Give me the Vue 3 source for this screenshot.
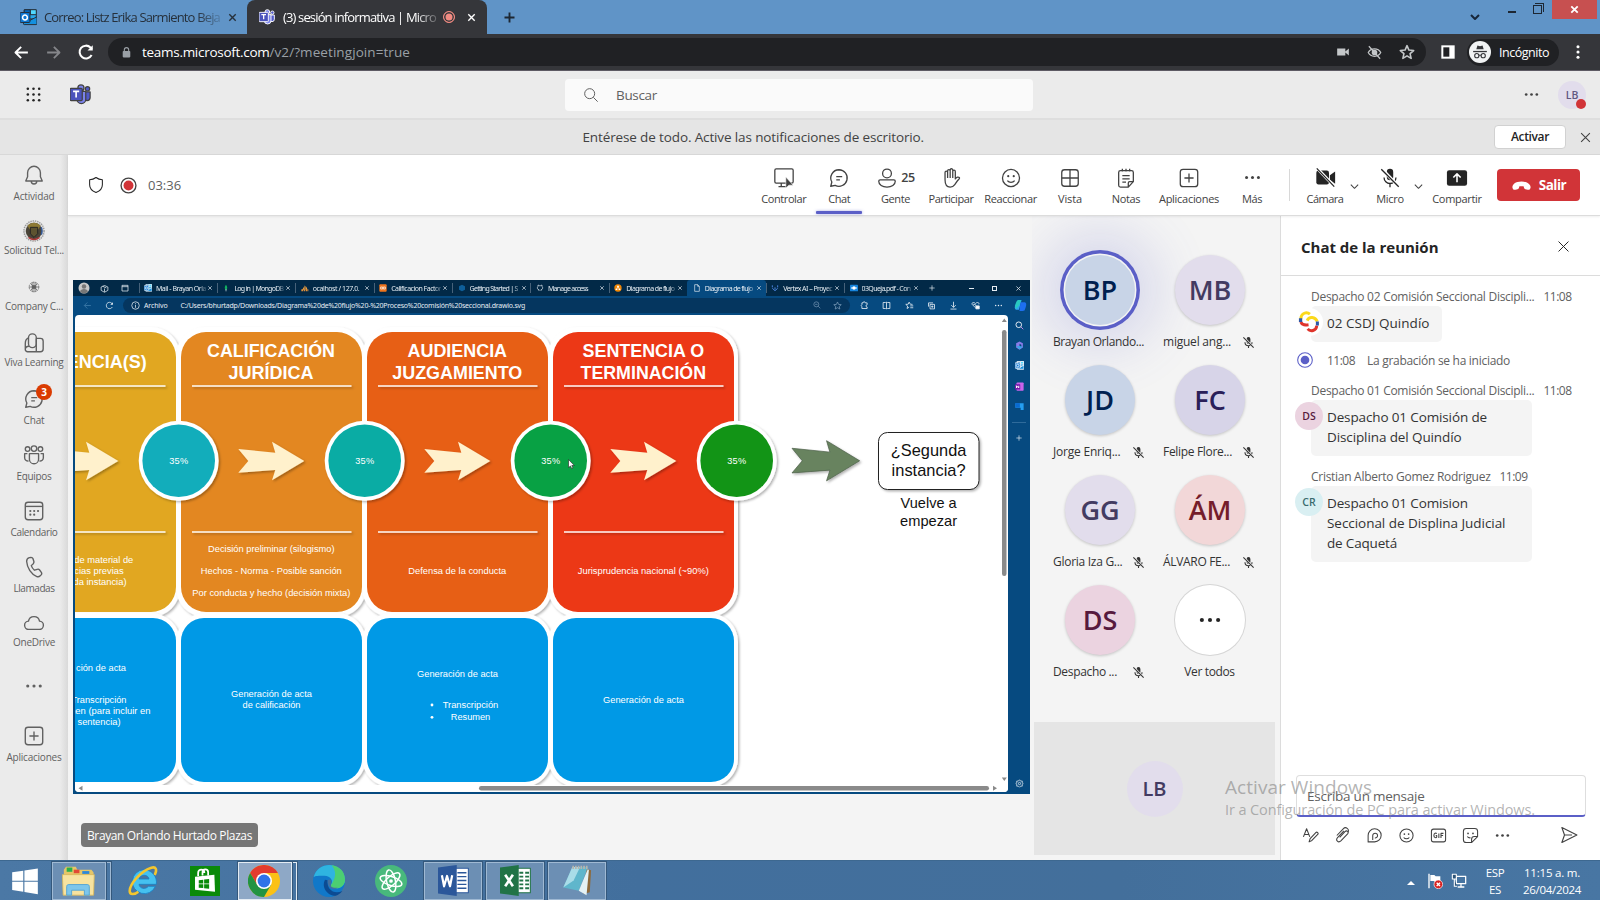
<script setup>
import { h } from 'vue'

// Tunes letter spacing so a label occupies the given width in px.
const vFit = {
  mounted(el, { value }) {
    const n = el.textContent.trim().length
    const w = el.getBoundingClientRect().width
    if (value && n) el.style.letterSpacing = (value - w) / n + 'px'
  },
}

const teams = '<circle cx="12.500" cy="4.500" r="3.500" fill="#7b83eb"/><circle cx="20" cy="5.500" r="2.500" fill="#5059c9"/><path d="M16 9h7v6.500a3.500 3.500 0 0 1-7 0z" fill="#5059c9"/><path d="M8 8.500h10v9a5 5 0 0 1-10 0z" fill="#7b83eb"/><rect x="0" y="5" width="14" height="14" rx="1.200" fill="#4b53bc"/><path d="M3.500 8.500h7M7 8.500V15.500" stroke="#fff" stroke-width="1.900"/>'
const outlook = '<rect x="6" y="1" width="17" height="13" rx="1" fill="#28a8ea"/><path d="M14.500 1H23v7h-8.500z" fill="#50d9ff"/><path d="M6 1h8.500v7H6z" fill="#0364b8"/><path d="M5 11l9 5 10-5v10a1 1 0 0 1-1 1H6a1 1 0 0 1-1-1z" fill="#1490df"/><rect x="0" y="5" width="14" height="14" rx="1.200" fill="#0f78d4"/><circle cx="7" cy="12" r="3.400" fill="none" stroke="#fff" stroke-width="2.100"/>'
const dots = '<g fill="currentColor" stroke="none"><circle cx="4.500" cy="12" r="1.900"/><circle cx="12" cy="12" r="1.900"/><circle cx="19.500" cy="12" r="1.900"/></g>'
const chatPath = '<path d="M12 3a9 9 0 1 1-4.200 17L3 21l1.200-4.600A9 9 0 0 1 12 3z"/><path d="M9 10.500h6.500M9 14h4"/>'
const smile = '<circle cx="12" cy="12" r="9.300"/><path d="M8 14.800c2 2.500 6 2.500 8 0"/><g fill="currentColor" stroke="none"><circle cx="9" cy="10" r="1.200"/><circle cx="15" cy="10" r="1.200"/></g>'
const micOff = '<rect x="8.500" y="2" width="7" height="12.500" rx="3.500" fill="currentColor" stroke="none"/><path d="M5.500 11.500a6.500 6.500 0 0 0 13 0M12 18v4"/><path d="M3.500 2.500l18 19" stroke="var(--bg,#fff)" stroke-width="3.500"/><path d="M2.500 2.500l19 19"/>'
const plusBox = '<rect x="2.500" y="2.500" width="19" height="19" rx="3"/><path d="M12 7v10M7 12h10"/>'
const icons = {
  teams, outlook, dots, smile, micOff, plusBox,
  chat: chatPath,
  close: '<path d="M5 5l14 14M19 5L5 19"/>',
  plus: '<path d="M12 4v16M4 12h16"/>',
  down: '<path d="M4 8l8 8 8-8"/>',
  back: '<path d="M21 12H4M11.500 4L3.500 12l8 8"/>',
  fwd: '<path d="M3 12h17M12.500 4l8 8-8 8"/>',
  reload: '<path d="M19.500 16A8.500 8.500 0 1 1 18 6l2 2"/><path d="M21 3v7h-7z" fill="currentColor" stroke="none"/>',
  lock: '<rect x="5" y="9" width="14" height="12" rx="1.500" fill="currentColor" stroke="none"/><path d="M8 10V7a4 4 0 0 1 8 0v3"/>',
  cam: '<path d="M2 6h14v12H2zM16 11l6-5v12l-6-5z" fill="currentColor" stroke="none"/>',
  eyeOff: '<path d="M2 12c4-8 16-8 20 0-4 8-16 8-20 0z"/><circle cx="12" cy="12" r="3.500" fill="currentColor"/><path d="M3 2l18 20"/>',
  star: '<path d="M12 2.500l2.900 6.600 7.100.7-5.400 4.700 1.600 7L12 17.800l-6.200 3.700 1.600-7L2 9.800l7.100-.7z"/>',
  side: '<path d="M2 2h20v20H2z" fill="#fff" stroke="none"/><path d="M5 5h9v14H5z" fill="#202124" stroke="none"/>',
  incog: '<circle cx="12" cy="12" r="12" fill="#f1f3f4" stroke="none"/><path d="M8 9l1.200-4 2.800.7 2.800-.7L16 9z" fill="#35363a" stroke="none"/><path d="M4.500 11.500h15" stroke="#35363a"/><g fill="none" stroke="#35363a" stroke-width="1.200"><circle cx="8.500" cy="16" r="2.300"/><circle cx="15.500" cy="16" r="2.300"/><path d="M11 15.500h2"/></g>',
  kebab: '<g fill="currentColor" stroke="none"><circle cx="12" cy="4" r="2.300"/><circle cx="12" cy="12" r="2.300"/><circle cx="12" cy="20" r="2.300"/></g>',
  waffle: '<g fill="#242424" stroke="none"><circle cx="4" cy="4" r="1.800"/><circle cx="12" cy="4" r="1.800"/><circle cx="20" cy="4" r="1.800"/><circle cx="4" cy="12" r="1.800"/><circle cx="12" cy="12" r="1.800"/><circle cx="20" cy="12" r="1.800"/><circle cx="4" cy="20" r="1.800"/><circle cx="12" cy="20" r="1.800"/><circle cx="20" cy="20" r="1.800"/></g>',
  search: '<circle cx="10" cy="10" r="7.500"/><path d="M15.500 15.500L22 22"/>',
  shield: '<path d="M12 2c2.500 2 5.500 3 8.500 3v6.500c0 5-3.500 8.500-8.500 10.500-5-2-8.500-5.500-8.500-10.500V5C6.500 5 9.500 4 12 2z"/>',
  rec: '<circle cx="12" cy="12" r="10.500" stroke-width="1.900"/><circle cx="12" cy="12" r="7" fill="#d13438" stroke="none"/>',
  control: '<rect x="2" y="2" width="20" height="15.500" rx="1.500"/><path d="M9 17.500V21M6 21.500h8"/><path d="M14 11v12l3.300-3.200H22z" fill="currentColor" stroke="#fff" stroke-width=".6"/>',
  person: '<circle cx="12" cy="7" r="4.800"/><path d="M4.500 14h15a1.500 1.500 0 0 1 1.500 1.500c0 4-4 6.500-9 6.500s-9-2.500-9-6.500A1.500 1.500 0 0 1 4.500 14z"/>',
  hand: '<path d="M5.500 14V6a1.400 1.400 0 0 1 2.800 0V4.200a1.400 1.400 0 0 1 2.800 0V3.300a1.400 1.400 0 0 1 2.800 0v1.500a1.400 1.400 0 0 1 2.800 0V13c1.500-2 3.300-2.500 4.300-1.500.6.600.2 1.300-.4 1.800-2.300 1.900-3 4-4.500 6-1.300 1.800-3 2.700-5 2.700-3.800 0-5.600-3-5.600-8zM8.300 6v6M11.100 4.500V12M13.900 4.800V12"/>',
  grid: '<rect x="3" y="3" width="18" height="18" rx="3"/><path d="M12 3v18M3 12h18"/>',
  notes: '<path d="M4 6a2 2 0 0 1 2-2h12a2 2 0 0 1 2 2v10l-5.500 6H6a2 2 0 0 1-2-2zM20 16h-4a1.500 1.500 0 0 0-1.500 1.500V22M8 2v3M12 2v3M16 2v3M8 9.500h8M8 13h8M8 16.500h4"/>',
  camOff: '<rect x="1.500" y="4" width="14.500" height="16" rx="2.500" fill="currentColor" stroke="none"/><path d="M17 9.500L23 5v14l-6-4.500z" fill="currentColor" stroke="none"/><path d="M3.500 2.500l19 20" stroke="#fff" stroke-width="3.500"/><path d="M2 1.500l20 21"/>',
  share: '<rect x="1" y="3.500" width="22" height="17" rx="2.500" fill="currentColor" stroke="none"/><path d="M12 16.500V8M8 11.500L12 7.500l4 4" stroke="#fff" stroke-width="1.700"/>',
  hang: '<path d="M2 15.500c-1.500-3 1.500-8 10-8s11.500 5 10 8c-.5 1.500-1.500 1.600-3 1.300l-2.500-.6c-1.500-.4-1.800-1-1.800-3-1.500-.6-3.900-.6-5.400 0 0 2-.3 2.600-1.800 3L5 16.800c-1.500.3-2.500.2-3-1.300z" fill="currentColor" stroke="none"/>',
  bell: '<path d="M12 2.500a7 7 0 0 0-7 7V14l-2 4.500h18L19 14V9.500a7 7 0 0 0-7-7zM9 18.800a3 3 0 0 0 6 0"/>',
  crest: '<circle cx="12" cy="12" r="11" fill="#ddd" stroke="#9a9a9a" stroke-dasharray="1.500 1"/><circle cx="12" cy="12" r="9" fill="#4a4438" stroke="none"/><path d="M5 6c4-4 10-4 14 0l-2 4H7z" fill="#8d7a35" stroke="none"/><path d="M8 8h8v7l-4 4-4-4z" fill="#5d5330" stroke="#222" stroke-width="1"/><path d="M6 19c4 3 8 3 12 0" stroke="#a33" stroke-width="1.500"/><path d="M20 8c1 3 1 6 0 8" stroke="#335a9b" stroke-width="1.500"/>',
  company: '<g stroke-width=".8"><circle cx="12" cy="12" r="5.300" stroke-dasharray="2 .8"/><path d="M12 6.500v11M6.500 12h11M8.500 8.500l7 7M15.500 8.500l-7 7M10 7v10M14 7v10"/></g><circle cx="12" cy="12" r="2.300" fill="currentColor" stroke="none"/>',
  viva: '<rect x="6" y="2" width="8.500" height="15" rx="4.200"/><path d="M6 6.500c-2.500 1-3.500 3-3.500 6V19a2.500 2.500 0 0 0 2.500 2.500h14a3 3 0 0 0 3-3V10a3 3 0 0 0-3-3h-4.500M14.500 7v14.500M2.500 19c0-2 1.500-3.500 4-3.500"/>',
  teamsNav: '<circle cx="5" cy="5.500" r="2.500"/><circle cx="12" cy="5" r="3"/><circle cx="19" cy="5.500" r="2.500"/><path d="M7 10.500h10v6a5 5 0 0 1-10 0zM4.800 10.500H1.800v4.500c0 2.500 2 3.700 4.200 3.500M19.200 10.500h3V15c0 2.500-2 3.700-4.200 3.500"/>',
  cal: '<rect x="2.500" y="2.500" width="19" height="19" rx="3"/><path d="M2.500 7h19"/><g fill="currentColor" stroke="none"><circle cx="8" cy="12" r="1.200"/><circle cx="12.200" cy="12" r="1.200"/><circle cx="16.400" cy="12" r="1.200"/><circle cx="8" cy="16" r="1.200"/><circle cx="12.200" cy="16" r="1.200"/></g>',
  phone: '<path d="M7 1.800l1.800-.3c1 0 1.700.4 2 1.300l1 3c.3 1 0 1.900-.6 2.600L9 10.500c.7 2 2 3.800 3.500 5l3-1c1-.3 2 0 2.600.8l1.900 2.600c.6.900.5 1.900-.2 2.700l-1 1c-1 1-2.400 1.300-3.700.8C9 20 4.500 13 4 6c-.1-2 1-3.700 3-4.200z"/>',
  cloud: '<path d="M6.500 19a4.500 4.500 0 0 1-.5-9c.5-3.300 3-5 6-5s5.500 1.700 6 5a4.500 4.500 0 0 1-.5 9z"/>',
  format: '<path d="M2 14L6.500 2.500 11 14M3.500 10.500h6M10 21l1.500-4.500 8-8.500a1.800 1.800 0 0 1 2.700 2.500l-8.200 8.500z"/>',
  clip: '<path d="M8 14.500l7.500-8c2.500-2.500 6 .5 3.700 3.200l-9.500 10c-3.500 3.300-8-.8-4.700-4.700L14 5.500M4 12l9-9.500c3.500-3.500 9.500 0 6.500 6"/>',
  loop: '<path d="M3 21v-9a9.200 9.200 0 1 1 9.200 9zM9.500 18.500V12.200a3.400 3.400 0 1 1 3 3.300"/>',
  gif: '<rect x="2" y="3" width="20" height="18" rx="3"/><path d="M9.500 9.200c-1-1-4-.8-4 2.800s3.500 3.500 4 2.300V12H8M12.500 9v6.500M15.500 15.500V9H19M15.500 12h3"/>',
  sticker: '<path d="M22 13.500V6a4 4 0 0 0-4-4H6a4 4 0 0 0-4 4v12a4 4 0 0 0 4 4h7.500zM22 13.500h-4.500a4 4 0 0 0-4 4V22M7.500 13.500c1 1.500 2.700 2 4.500 1.800"/><g fill="currentColor" stroke="none"><circle cx="8.500" cy="9" r="1.200"/><circle cx="15.500" cy="9" r="1.200"/></g>',
  send: '<path d="M2.500 2L22.500 12l-20 10L6 12zM6 12h10"/>',
  csdj: '<g stroke-width="3.200"><path d="M3 8.500C3.500 2 9.500.5 13 3.500" stroke="#fbd91b"/><path d="M3 12c1.500 4 5 3.500 8.500 3" stroke="#df342b"/><path d="M10 10.500c2-5 9-4.500 11 1" stroke="#fbd91b"/><path d="M20.500 16c-.5 6-7 7-10 3.500" stroke="#df342b"/></g><path d="M1 8h3.600v4H1zM19.500 11.500h3.300v4.200h-3.300z" fill="#2e58a7" stroke="none"/>',
  recPurple: '<circle cx="12" cy="12" r="11" stroke="#5b5fc7" stroke-width="1.600"/><circle cx="12" cy="12" r="6.500" fill="#5b5fc7" stroke="none"/>',
  user: '<circle cx="12" cy="12" r="11" fill="#c8c8c8" stroke="none"/><circle cx="12" cy="9" r="4.500" fill="#777" stroke="none"/><path d="M4 19c1-7 15-7 16 0-4 5-12 5-16 0z" fill="#777" stroke="none"/>',
  cube: '<path d="M3 8l9-4 9 4v9l-9 5-9-5zM7 6l10 4.500M12 12v9"/>',
  win: '<path d="M3 4h18v17H3zM3 8h18"/>',
  leaf: '<path d="M12 2c5 6 5 12 0 17-5-5-5-11 0-17z" fill="#10b060" stroke="none"/><path d="M12 15v7"/>',
  sail: '<path d="M11 3v14H3c4-4 6-8 8-14zM13 6c4 3 6 7 6 11h-6z" fill="#f0a040" stroke="none"/><path d="M1 19h22" stroke="#e0903a" stroke-width="6" stroke-dasharray="5 2"/>',
  orangeSq: '<rect x="1" y="1" width="22" height="22" rx="3" fill="#f0741c" stroke="none"/><path d="M5 9h6v6H5zM13 9h6v6h-6z" stroke="#fff"/>',
  hex: '<path d="M12 2l9 5v10l-9 5-9-5V7z" fill="#0e5f9a" stroke="none"/>',
  cat: '<path d="M9 21v-4c-6 0-6-8-3-10V3l4 2h4l4-2v4c3 2 3 10-3 10v4"/>',
  drawio: '<circle cx="12" cy="12" r="11" fill="#f08705" stroke="none"/><path d="M12 8l-4 7M12 8l4 7" stroke="#fff"/><path d="M9.500 5h5v4h-5zM5 14h5v4H5zM14 14h5v4h-5z" fill="#fff" stroke="none"/>',
  file: '<path d="M5 2h9l5 5v15H5zM14 2v5h5"/>',
  vertex: '<path d="M4 4v6M12 10v6M20 4v6M4 13l8 7 8-7" stroke="#4b83dc" stroke-width="3"/>',
  conf: '<rect x="0" y="2" width="24" height="20" rx="2" fill="#1684dc" stroke="none"/><path d="M3 12h18" stroke="#fff" stroke-width="3"/><circle cx="12" cy="12" r="5" fill="#fff" stroke="none"/>',
  info: '<circle cx="12" cy="12" r="10"/><path d="M12 10v8M12 5.500v2"/>',
  zoomOut: '<circle cx="10" cy="10" r="7.500"/><path d="M15.500 15.500L22 22M6.500 10h7"/>',
  puzzle: '<path d="M8 5a3 3 0 0 1 6 0h5v5a3 3 0 0 0 0 6v4H5v-5a3 3 0 0 1 0-5V5z"/>',
  split: '<path d="M10 4H3v16h7M14 4h7v16h-7M12 2v20"/>',
  favs: '<path d="M20 9l-6-.5L11 3 8.500 8.500 2 9l5 4.500L5.500 20l5.500-3.500M14 13h8M14 18h8"/>',
  coll: '<path d="M4 15V5h12M8 9h12v12H8zM14 12v6M11 15h6"/>',
  dl: '<path d="M12 2v15M6 11l6 6 6-6M4 21.500h16"/>',
  essentials: '<path d="M12 18L3 9c-2-5 5-7 9-2 4-5 11-3 9 2M6 9h5l2 4"/><path d="M13 13h9v8h-9z" fill="#fff"/>',
  copilot: '<path d="M8 2h6l-5 18H6c-5 0-5-4-4-8z" fill="#2ea5ef" stroke="none"/><path d="M12 6h6c5 0 5 4 4 8l-2 6c-1 2-2 2-4 2h-6z" fill="#1d6ff0" stroke="none"/><path d="M8 2h5l-3 9-6 7C0 17 3 3 8 2z" fill="#28c9c0" stroke="none"/>',
  searchC: '<circle cx="10" cy="10" r="7.500"/><path d="M15.500 15.500L22 22" stroke="#c48ae6"/>',
  m365: '<path d="M12 1l9 5v11l-9 6-9-6V6z" fill="#8a7be8" stroke="none"/><path d="M12 7l5 3v5l-5 3z" fill="#064a80" stroke="none"/><path d="M3 14l9 8 9-7-9-2z" fill="#39a5e8" stroke="none"/>',
  onenote: '<rect x="4" y="1" width="19" height="22" rx="2" fill="#ca64ea" stroke="none"/><rect x="0" y="6" width="14" height="14" rx="1" fill="#7719aa" stroke="none"/><path d="M4 16v-6l6 6v-6" stroke="#fff"/>',
  drop: '<path d="M1 3h22v18h-8v-6H1z" fill="#249ef0" stroke="none"/><path d="M1 3h12v12H1z" fill="#0a6ad0" stroke="none"/>',
  gear: '<circle cx="12" cy="12" r="3"/><path d="M12 2l3 3.500 4.500 0-.5 4.500L22 12l-3 2.500.5 4.500H15L12 22l-3-3H4.500l.5-4.500L2 12l3-2-.5-4.500H9z"/>',
  start: '<path d="M1 4.500l9.500-1.300v8.500H1zM11.500 3l11.500-1.800v10.500H11.500zM1 12.700h9.500v8.500L1 19.800zM11.500 12.700H23v10.600l-11.500-1.800z" fill="#fff" stroke="none"/>',
  explorer: '<path d="M2 4l1.500-2h7l1 2h10L23 6v15H2z" fill="#e6c668" stroke="none"/><path d="M4 2.500h4v3H4z" fill="#2bb04a" stroke="none"/><path d="M9 4h4v2.500H9z" fill="#e24a34" stroke="none"/><path d="M15 5h5v2h-5z" fill="#2e88d8" stroke="none"/><path d="M1 7.500h22.500L23 22H1.500z" fill="#f7e3a0" stroke="#d9b85c" stroke-width=".6"/><path d="M4 22v-6c0-1 .5-1.500 1.500-1.500h13c1 0 1.500.5 1.500 1.500v6h-3.500v-3.500h-9V22z" fill="#7cc6ec" stroke="#4aa0d4" stroke-width=".6"/>',
  ie: '<path d="M12.500 3.500a9 9 0 1 0 8.800 12.500h-5.300c-2 2.500-6.500 2-7-1.500h13A9.500 9.500 0 0 0 12.500 3.500zM9 10.500c.8-3.600 7-3.800 7.500 0z" fill="#45c1f0" stroke="#1a7fc4" stroke-width=".6"/><path d="M20.800 7.500c2-4 1-6.500-2.500-5.500C11 4 2 14 2 19.500c0 3 3.500 3 6.500.5" stroke="#f3c62f" stroke-width="1.900"/>',
  store: '<path d="M0 0h24v24H0z" fill="#0a8a0a" stroke="none"/><path d="M4 8.500l15.500-1.500.5 13.500L4 19z" fill="#fff" stroke="none"/><path d="M6.500 8V5.500c0-3.500 5-3.500 5 0M10 7.500V5c0-3 4.500-3 4.500 0v2.500" stroke="#fff"/><path d="M7 11.300l3.600-.4v3H7zM11.300 10.800l4-.4v3.500h-4zM7 14.600h3.600v3L7 17.300zM11.300 14.600h4v3.500l-4-.4z" fill="#0a8a0a" stroke="none"/>',
  chrome: '<circle cx="12" cy="12" r="12" fill="#fbc116" stroke="none"/><path d="M1.600 6A12 12 0 0 1 22.400 6H12L7 15z" fill="#e33b2e" stroke="none"/><path d="M1.600 6A12 12 0 0 0 12 24l5.200-9L12 12 7 15z" fill="#229342" stroke="none"/><circle cx="12" cy="12" r="6" fill="#fff" stroke="none"/><circle cx="12" cy="12" r="4.800" fill="#2f73e8" stroke="none"/>',
  edge: '<circle cx="12" cy="12" r="12" fill="#1178c9" stroke="none"/><path d="M.5 9C2 3 7 0 12 0c7 0 12 5 12 11 0 4-3 6.500-6.500 6.500-3 0-4.500-1-4-2.500 2-3 0-7-5-7-4 0-7 0-8 1z" fill="#2fb4e0" stroke="none"/><path d="M14 .2C20 1 24 5 24 11c0 4-3 6.500-6.500 6.500-3 0-4.500-1-4-2.500C17 10 18 5 14 .2z" fill="#4ccf72" stroke="none"/><path d="M9 11c-3 6 2 12 8 12 2-.6 4-2 5-3.500-6 3-12-1-11-8z" fill="#0c4b92" stroke="none"/><path d="M11 11.500c1.500-1.500 3.500-.5 2.500 2.500-1 2 1 3.500 5 3-3 2.500-8 .5-7.500-5.500z" fill="#44709f" stroke="none"/>',
  atom: '<circle cx="12" cy="12" r="12" fill="#48b97c" stroke="none"/><g stroke="#fff" stroke-width="1.100"><ellipse cx="12" cy="12" rx="3.300" ry="8.500" transform="rotate(-12 12 12)"/><ellipse cx="12" cy="12" rx="3.300" ry="8.500" transform="rotate(48 12 12)"/><ellipse cx="12" cy="12" rx="3.300" ry="8.500" transform="rotate(108 12 12)"/></g><circle cx="12" cy="12" r="1.400" fill="#fff" stroke="none"/>',
  word: '<path d="M12 2.500h11.500v19H12z" fill="#fff" stroke="#2b579a" stroke-width=".8"/><path d="M15 6h7M15 9h7M15 12h7M15 15h7M15 18h7" stroke="#2b579a" stroke-width="1.100"/><path d="M0 2l14.500-2v24L0 22z" fill="#2b579a" stroke="none"/><path d="M3 8l1.700 8.500L7 8.500l2.300 8L11 8" stroke="#fff" stroke-width="1.700"/>',
  excel: '<path d="M12 2.500h11.500v19H12z" fill="#fff" stroke="#217346" stroke-width=".8"/><path d="M15 6h3M19.500 6h3M15 9h3M19.500 9h3M15 12h3M19.500 12h3M15 15h3M19.500 15h3M15 18h3M19.500 18h3" stroke="#217346" stroke-width="1.500"/><path d="M0 2l14.500-2v24L0 22z" fill="#217346" stroke="none"/><path d="M4 7.500l6 9M10 7.500l-6 9" stroke="#fff" stroke-width="2"/>',
  notepad: '<path d="M19 3l3.500 1-1 17-5 1.500z" fill="#8d6a3c" stroke="none"/><path d="M8 1.500h12L13 20 1 17.500z" fill="#5fb6cc" stroke="none"/><path d="M8 1.500h6L9 12 1 17.500z" fill="#a9dce8" stroke="none"/><path d="M20 3l.8 1L19 23.500l-6-3.500z" fill="#e4f2f5" stroke="none"/><path d="M8 1.800h12" stroke="#b5b5ae" stroke-width="2.500" stroke-dasharray="1.300 .8"/>',
  flag: '<path d="M3 1v22" stroke="#fff" stroke-width="2"/><path d="M5 3h6l2 2h7v9h-8l-2-2H5z" fill="#fff" stroke="none"/><circle cx="17" cy="17" r="6.500" fill="#d9201f" stroke="#fff" stroke-width="1"/><path d="M14.500 14.500l5 5M19.500 14.500l-5 5" stroke="#fff" stroke-width="2"/>',
  net: '<path d="M8 5h14v11H8zM15 16v4M10 21h10" stroke="#fff" stroke-width="1.900"/><path d="M2 2h6v7H2zM5 9v11h4" stroke="#fff" stroke-width="1.600" fill="#2d5478"/>',
}

const Ico = (p) =>
  h('svg', {
    class: 'ico', viewBox: '0 0 24 24', width: p.s, height: p.h || p.s, fill: 'none',
    stroke: 'currentColor', 'stroke-width': p.w || 1.4, 'stroke-linejoin': 'round', innerHTML: icons[p.n],
  })
Ico.props = ['n', 's', 'h', 'w']

const nav = [
  { i: 'bell', t: 'Actividad', w: 41, g: 2 },
  { i: 'crest', t: 'Solicitud Tel...', w: 60, g: 0 },
  { i: 'company', t: 'Company C...', w: 58, g: 0 },
  { i: 'viva', t: 'Viva Learning', w: 59, g: 0 },
  { i: 'chat', t: 'Chat', w: 21, g: 2, badge: 3 },
  { i: 'teamsNav', t: 'Equipos', w: 35, g: 2 },
  { i: 'cal', t: 'Calendario', w: 47, g: 2 },
  { i: 'phone', t: 'Llamadas', w: 41, g: 2 },
  { i: 'cloud', t: 'OneDrive', w: 42, g: 0 },
]
const tools = [
  { i: 'control', t: 'Controlar', w: 45, s: 55.5 },
  { i: 'chat', t: 'Chat', w: 22, s: 55.5, on: true },
  { i: 'person', t: 'Gente', w: 29, s: 57, n: 25 },
  { i: 'hand', t: 'Participar', w: 45, s: 54 },
  { i: 'smile', t: 'Reaccionar', w: 52.5, s: 65 },
  { i: 'grid', t: 'Vista', w: 24, s: 54 },
  { i: 'notes', t: 'Notas', w: 28.5, s: 58 },
  { i: 'plusBox', t: 'Aplicaciones', w: 60, s: 68 },
  { i: 'dots', t: 'Más', w: 20, s: 58 },
]
const edgeTabs = [
  { i: 'outlook', t: 'Mail - Brayan Orla', w: 50 },
  { i: 'leaf', t: 'Log in | MongoDB', w: 49 },
  { i: 'sail', t: 'ocalhost / 127.0.', w: 46.5 },
  { i: 'orangeSq', t: 'Calificacion Factor', w: 50 },
  { i: 'hex', t: 'Getting Started | S', w: 48 },
  { i: 'cat', t: 'Manage access', w: 40 },
  { i: 'drawio', t: 'Diagrama de flujo', w: 48 },
  { i: 'file', t: 'Diagrama de flujo', w: 48, on: true },
  { i: 'vertex', t: 'Vertex AI – Proyec', w: 49 },
  { i: 'conf', t: '03Queja.pdf - Con', w: 49 },
]
const edgeTools = ['puzzle', 'split', 'favs', 'coll', 'dl', 'essentials', 'dots']
const edgeSide = ['searchC', 'm365', 'outlook', 'onenote', 'drop']

const cols = [
  { x: -5, c: '#e1a721' },
  { x: 181, c: '#e38721' },
  { x: 367, c: '#e75f15' },
  { x: 553, c: '#ec3816' },
]
const circles = [
  { x: 178.7, c: '#12adbb' },
  { x: 364.7, c: '#0aaca4' },
  { x: 550.7, c: '#08a144' },
  { x: 736.7, c: '#129416' },
]
const arrow = 'M0 7.300L37 11 33.700 0 66 19.300 33.700 38.600 37 28.300 0 31 10 19.300z'
// Diagram captions: x, baseline y, text, width, class
const T = [
  [271, 357, 'CALIFICACIÓN', 128, 'hd'], [271, 379, 'JURÍDICA', 85, 'hd'],
  [457.3, 357, 'AUDIENCIA', 99.500, 'hd'], [457.3, 379, 'JUZGAMIENTO', 130, 'hd'],
  [643.3, 357, 'SENTENCIA O', 121.500, 'hd'], [643.3, 379, 'TERMINACIÓN', 125.500, 'hd'],
  [106.7, 368, 'ENCIA(S)', 80, 'hd'],
  [271.300, 552.200, 'Decisión preliminar (silogismo)', 126.500, 'sm'],
  [271.300, 574.200, 'Hechos - Norma - Posible sanción', 141, 'sm'],
  [271.300, 596.200, 'Por conducta y hecho (decisión mixta)', 158, 'sm'],
  [457.300, 574.200, 'Defensa de la conducta', 98, 'sm'],
  [643.300, 574.200, 'Jurisprudencia nacional (~90%)', 131, 'sm'],
  [103.800, 563.300, 'de material de', 59, 'sm'],
  [99, 574.300, 'cias previas', 49.500, 'sm'],
  [100, 585.300, 'da instancia)', 53, 'sm'],
  [101, 671.300, 'ción de acta', 50, 'sm'],
  [99, 703, 'Transcripción', 55, 'sm'],
  [109, 714, 'men (para incluir en', 83, 'sm'],
  [99, 725, 'sentencia)', 43, 'sm'],
  [271.500, 697, 'Generación de acta', 81, 'sm'],
  [271.500, 708, 'de calificación', 58, 'sm'],
  [457.500, 677, 'Generación de acta', 81, 'sm'],
  [470.500, 708, 'Transcripción', 55.500, 'sm'],
  [470.500, 720, 'Resumen', 39.500, 'sm'],
  [643.500, 703, 'Generación de acta', 81, 'sm'],
  [928.600, 456, '¿Segunda', 75.500, 'seg'],
  [928.600, 476, 'instancia?', 74, 'seg'],
  [928.600, 508.200, 'Vuelve a', 56, 'vu'],
  [928.600, 526.200, 'empezar', 57, 'vu'],
]

const people = [
  { a: 'BP', t: 'Brayan Orlando...', w: 91, c: 'blue', talk: true },
  { a: 'MB', t: 'miguel ang...', w: 68, c: 'lav', m: true },
  { a: 'JD', t: 'Jorge Enriq...', w: 67.500, c: 'blue', m: true },
  { a: 'FC', t: 'Felipe Flore...', w: 69, c: 'vio', m: true },
  { a: 'GG', t: 'Gloria Iza G...', w: 69.500, c: 'lav', m: true },
  { a: 'ÁM', t: 'ÁLVARO FE...', w: 67, c: 'red', m: true },
  { a: 'DS', t: 'Despacho ...', w: 64, c: 'pink', m: true },
]
const msgs = [
  { from: 'Despacho 02 Comisión Seccional Discipli...', fw: 223.500, at: '11:08', lines: [['02 CSDJ Quindío', 102.500]], bw: 131, cls: 'm1' },
  { note: true },
  { from: 'Despacho 01 Comisión Seccional Discipli...', fw: 223.500, at: '11:08', lines: [['Despacho 01 Comisión de', 160], ['Disciplina del Quindío', 134.500]], bw: 221, a: 'DS', c: 'pink', cls: 'm2' },
  { from: 'Cristian Alberto Gomez Rodriguez', fw: 179.500, at: '11:09', lines: [['Despacho 01 Comision', 141], ['Seccional de Displina Judicial', 178.500], ['de Caquetá', 70]], bw: 221, a: 'CR', c: 'teal', cls: 'm3' },
]
const composer = ['format', 'clip', 'loop', 'smile', 'gif', 'sticker', 'dots']
const task = [
  { i: 'explorer', s: 34, k: 'open stack' },
  { i: 'ie', s: 32, k: '' },
  { i: 'store', s: 30, k: '' },
  { i: 'chrome', s: 32, k: 'open active stack' },
  { i: 'edge', s: 32, k: '' },
  { i: 'atom', s: 32, k: '' },
  { i: 'word', s: 31, k: 'open' },
  { i: 'excel', s: 31, k: 'open' },
  { i: 'notepad', s: 31, k: 'open' },
]
</script>

<template>
  <div class="screen">
    <div class="tabs">
      <div class="tab">
        <Ico n="outlook" s="17" />
        <span class="clip bt"><span v-fit="176">Correo: Listz Erika Sarmiento Beja</span></span>
        <Ico class="tx" n="close" s="11" w="3" />
      </div>
      <div class="tab on">
        <Ico n="teams" s="16" />
        <span class="clip at"><span v-fit="153">(3) sesión informativa | Micro</span></span>
        <i class="live"></i>
        <Ico class="tx on" n="close" s="11" w="3" />
      </div>
      <Ico class="new" n="plus" s="15" w="3" />
      <div class="wc">
        <Ico class="dn" n="down" s="12" w="4" />
        <i class="min"></i><i class="max"></i>
        <span class="x"><Ico n="close" s="11" w="4" /></span>
      </div>
    </div>
    <div class="bar">
      <Ico n="back" s="17" w="2.700" /><Ico class="dim" n="fwd" s="17" w="2.500" /><Ico n="reload" s="18" w="2.700" />
      <div class="omni">
        <Ico class="lk" n="lock" s="13" w="2" />
        <span class="u1" v-fit="127.500">teams.microsoft.com</span><span class="u2" v-fit="140.500">/v2/?meetingjoin=true</span>
        <span class="oi"><Ico n="cam" s="14" /><Ico n="eyeOff" s="15" w="2" /><Ico n="star" s="16" w="2.400" /></span>
      </div>
      <Ico n="side" s="16" class="sd" />
      <div class="inc"><Ico n="incog" s="22" /><span v-fit="50">Incógnito</span></div>
      <Ico n="kebab" s="16" class="kb" />
    </div>

    <header class="top">
      <Ico n="waffle" s="17" class="wf" /><Ico n="teams" s="21" class="tm" />
      <div class="find"><Ico n="search" s="16" w="1.500" /><span v-fit="41">Buscar</span></div>
      <Ico n="dots" s="17" class="td" />
      <div class="me">LB<i></i></div>
    </header>
    <div class="notif">
      <span v-fit="341.500">Entérese de todo. Active las notificaciones de escritorio.</span>
      <button><b v-fit="38">Activar</b></button>
      <Ico n="close" s="15" w="1.700" />
    </div>

    <div class="main">
      <nav>
        <div v-for="n in nav" :key="n.t" class="ni">
          <Ico :n="n.i" s="22" w="1.500" />
          <span v-if="n.badge" class="badge">{{ n.badge }}</span>
          <span class="nl" :style="{ marginTop: n.g + 'px' }" v-fit="n.w">{{ n.t }}</span>
        </div>
        <Ico n="dots" s="20" class="nd" />
        <div class="ni"><Ico n="plusBox" s="22" w="1.500" /><span class="nl low" v-fit="55">Aplicaciones</span></div>
      </nav>

      <div class="work">
        <div class="meet">
          <Ico n="shield" s="18" w="1.400" class="sh" /><Ico n="rec" s="17" class="rc" /><span class="tm2" v-fit="33">03:36</span>
          <div class="tools">
            <div v-for="t in tools" :key="t.t" class="tool" :class="{ on: t.on }" :style="{ width: t.s + 'px' }">
              <div class="ti"><Ico :n="t.i" :s="t.i === 'dots' ? 19 : 22" w="1.400" /><b v-if="t.n" v-fit="13.500">{{ t.n }}</b></div>
              <span v-fit="t.w">{{ t.t }}</span>
            </div>
          </div>
          <i class="dv"></i>
          <div class="tool cam"><div class="ti"><Ico n="camOff" s="21" w="1.400" /></div><span v-fit="37">Cámara</span></div>
          <Ico n="down" s="11" w="2.200" class="cv" />
          <div class="tool mic"><div class="ti"><Ico n="micOff" s="22" w="1.400" /></div><span v-fit="27.500">Micro</span></div>
          <Ico n="down" s="11" w="2.200" class="cv" />
          <div class="tool shr"><div class="ti"><Ico n="share" s="22" /></div><span v-fit="49.500">Compartir</span></div>
          <button class="leave"><Ico n="hang" s="21" /><b v-fit="27.500">Salir</b></button>
        </div>

        <div class="body">
          <section class="stage">
            <div class="edge">
              <div class="etabs">
                <Ico n="user" s="12" /><Ico n="cube" s="9" w="2" /><Ico n="win" s="8" w="2.200" />
                <div v-for="(t, k) in edgeTabs" :key="k" class="etab" :class="{ on: t.on }">
                  <Ico :n="t.i" s="8" w="2" /><span class="clip et"><span v-fit="t.w">{{ t.t }}</span></span><Ico n="close" s="6" w="2.600" />
                </div>
                <Ico class="ep" n="plus" s="8" w="2" />
                <span class="ewc"><i></i><em></em><Ico n="close" s="7" w="2.600" /></span>
              </div>
              <div class="ebar">
                <Ico n="back" s="9" w="2" class="dim2" /><Ico n="reload" s="9" w="2" />
                <div class="eurl">
                  <Ico n="info" s="9" w="2" /><span v-fit="23.500">Archivo</span>
                  <span class="path" v-fit="344.500">C:/Users/bhurtadp/Downloads/Diagrama%20de%20flujo%20-%20Proceso%20comisión%20seccional.drawio.svg</span>
                  <span class="eo"><Ico n="zoomOut" s="8" w="2" /><Ico n="star" s="9" w="2" /></span>
                </div>
                <div class="etools"><Ico v-for="e in edgeTools" :key="e" :n="e" s="9" w="2.200" /><Ico n="copilot" s="13" /></div>
              </div>
              <div class="epage">
                <svg class="dia" width="933" height="477" viewBox="75 315 933 477">
                  <defs>
                    <filter id="sh" x="-20%" y="-20%" width="150%" height="150%"><feDropShadow dx="1.500" dy="1.500" stdDeviation="1" flood-opacity=".3" /></filter>
                  </defs>
                  <rect x="75" y="315" width="933" height="477" fill="#fff" />
                  <g v-for="c in cols" :key="c.x">
                    <rect :x="c.x - 5" y="327" width="190" height="290" rx="29" fill="#fff" filter="url(#sh)" />
                    <rect :x="c.x - 5" y="613" width="190" height="174" rx="29" fill="#fff" filter="url(#sh)" />
                  </g>
                  <rect x="75" y="785" width="933" height="7" fill="#fff" />
                  <g v-for="c in cols" :key="'f' + c.x">
                    <rect :x="c.x" y="332" width="181" height="280" rx="25" :fill="c.c" />
                    <rect :x="c.x" y="618" width="181" height="164" rx="23" fill="#0099e6" />
                    <g filter="url(#sh)"><path :d="`M${c.x + 11} 386h159.500M${c.x + 11} 532h159.500`" stroke="#fff" stroke-opacity=".72" stroke-width="1.800" /></g>
                    <path :d="arrow" :transform="`translate(${c.x + 57.300} 441.700)`" fill="#fff1cc" filter="url(#sh)" />
                  </g>
                  <path :d="arrow" transform="translate(792 440.700) scale(1.025 1.040)" fill="#67835f" stroke="#4d5f49" stroke-width=".7" filter="url(#sh)" />
                  <g v-for="c in circles" :key="c.c">
                    <circle :cx="c.x" cy="460.700" r="40" fill="#fff" filter="url(#sh)" />
                    <circle :cx="c.x" cy="460.700" r="36.300" :fill="c.c" />
                    <text :x="c.x" y="464" class="sm" textLength="18.700">35%</text>
                  </g>
                  <rect x="878.500" y="432.500" width="100.500" height="57" rx="9" fill="#fff" stroke="#222" filter="url(#sh)" />
                  <circle cx="432" cy="705" r="1.400" fill="#fff" /><circle cx="432" cy="717.300" r="1.400" fill="#fff" />
                  <text v-for="(t, k) in T" :key="k" :x="t[0]" :y="t[1]" :textLength="t[3]" :class="t[4]" lengthAdjust="spacingAndGlyphs">{{ t[2] }}</text>
                  <path d="M568.500 459.500v8l2-1.500 1.200 2.600 1.300-.6-1.200-2.500h2.500z" fill="#fff" stroke="#222" stroke-width=".6" />
                  <g fill="#8a8a8a"><rect x="1002" y="330" width="4.500" height="246" rx="2.200" /><path d="M1004.300 318.500l2.500 3.500h-5zM1004.300 781l2.500-3.500h-5zM78.500 788.300l4-2.500v5zM997 788.300l-4-2.500v5z" /><rect x="479" y="786" width="510" height="4.500" rx="2.200" /></g>
                </svg>
              </div>
              <div class="eside">
                <Ico v-for="e in edgeSide" :key="e" :n="e" s="9" w="2.600" />
                <i></i><Ico n="plus" s="8" w="2" /><span></span><Ico n="gear" s="9" w="2" />
              </div>
            </div>
            <div class="who"><span v-fit="165">Brayan Orlando Hurtado Plazas</span></div>
          </section>

          <aside class="people">
            <div class="pg">
              <div v-for="p in people" :key="p.a" class="p">
                <div class="av" :class="[p.c, { talk: p.talk }]">{{ p.a }}</div>
                <div class="pn"><span v-fit="p.w">{{ p.t }}</span><Ico v-if="p.m" n="micOff" s="13" w="2" /></div>
              </div>
              <div class="p"><div class="av more"><Ico n="dots" s="26" /></div><div class="pn all"><span v-fit="50.500">Ver todos</span></div></div>
            </div>
            <div class="self"><div class="sav"><span v-fit="24">LB</span></div></div>
          </aside>

          <aside class="chat">
            <div class="ch"><b v-fit="137.500">Chat de la reunión</b><Ico n="close" s="17" w="1.400" /></div>
            <div class="log">
              <template v-for="(m, k) in msgs" :key="k">
                <div v-if="m.note" class="note"><Ico n="recPurple" s="16" /><span v-fit="28">11:08</span><span class="nt" v-fit="143">La grabación se ha iniciado</span></div>
                <div v-else class="msg" :class="m.cls">
                  <div class="mh"><span v-fit="m.fw">{{ m.from }}</span><span v-fit="28">{{ m.at }}</span></div>
                  <div class="bub" :style="{ width: m.bw + 'px' }">
                    <div class="mav" :class="m.c"><template v-if="m.a">{{ m.a }}</template><Ico v-else n="csdj" s="22" /></div>
                    <div v-for="l in m.lines" :key="l[0]" class="ln"><span v-fit="l[1]">{{ l[0] }}</span></div>
                  </div>
                </div>
              </template>
            </div>
            <div class="box"><span v-fit="117.500">Escriba un mensaje</span></div>
            <div class="ci"><Ico v-for="c in composer" :key="c" :n="c" s="17" w="1.500" /><Ico class="send" n="send" s="18" w="1.500" /></div>
          </aside>
        </div>
      </div>
    </div>

    <footer>
      <div class="start"><Ico n="start" s="28" /></div>
      <div v-for="t in task" :key="t.i" class="tk" :class="t.k"><Ico :n="t.i" :s="t.s" /></div>
      <div class="tray">
        <i></i><Ico n="flag" s="16" /><Ico n="net" s="16" />
        <div class="tt lang"><span v-fit="18.500">ESP</span><span v-fit="12">ES</span></div>
        <div class="tt"><span v-fit="56">11:15 a. m.</span><span v-fit="58">26/04/2024</span></div>
      </div>
    </footer>

    <div class="wm"><div class="w1"><span v-fit="147">Activar Windows</span></div><div class="w2"><span v-fit="310">Ir a Configuración de PC para activar Windows.</span></div></div>
  </div>
</template>

<style>
body { overflow: hidden; }
.ico { display: block; flex: none; }
</style>

<style scoped>
* { box-sizing: border-box; }
.screen { position: relative; width: 1600px; height: 900px; overflow: hidden; font-family: "Open Sans", "Noto Sans", sans-serif; font-size: 12px; color: #424242; display: flex; flex-direction: column; }
span, b { white-space: nowrap; }
button { font: inherit; border: 0; padding: 0; }
.clip { overflow: hidden; display: inline-flex; mask-image: linear-gradient(90deg, #000 86%, #0003); }
.clip > span { flex: none; }

.tabs { height: 34px; background: #6094c7; display: flex; align-items: center; color: #26303b; font-size: 13px; }
.tab { height: 34px; display: flex; align-items: center; width: 247px; padding-left: 20px; }
.tab.on { width: 240px; background: #35363a; border-radius: 8px 8px 0 0; color: #fff; padding-left: 12px; }
.bt { width: 177px; margin-left: 7px; }
.tab .tx { margin-left: 6px; }
.tab .tx.on { margin-left: 4px; }
.at { width: 154px; margin-left: 8px; }
.live { width: 12px; height: 12px; border-radius: 50%; margin: 0 7px 0 6px; background: #f28b82; border: 1px solid #f28b82; box-shadow: inset 0 0 0 1.500px #35363a; }
.new { margin-left: 15px; color: #1d2733; }
.wc { margin-left: auto; display: flex; height: 34px; }
.dn { margin: 11px 27px 0 0; color: #17263a; }
.min { width: 8px; height: 2px; background: #1d2733; margin: 11px 17px 0 0; }
.max { width: 9px; height: 9px; border: 1.500px solid #1d2733; margin: 5px 10px 0 0; box-shadow: 1px -1px 0 #6094c7, 2px -2px 0 #1d2733; }
.x { width: 45px; height: 19px; background: #c75050; color: #fff; margin-right: 3px; display: grid; place-items: center; }

.bar { height: 37px; background: #35363a; border-bottom: 1px solid #5d5a63; display: flex; align-items: center; color: #fff; padding-left: 13px; gap: 15px; font-size: 13.500px; }
.dim { color: #85868a; }
.omni { width: 1318px; height: 28px; margin-left: -2px; border-radius: 14px; background: #202124; display: flex; align-items: center; padding: 0 11px 0 12px; flex: none; }
.lk { color: #9aa0a6; margin-right: 9px; }
.u2 { color: #9aa0a6; }
.oi { margin-left: auto; display: flex; gap: 17px; color: #c4c7c9; align-items: center; }
.sd { margin-left: -1px; }
.inc { width: 92px; height: 27px; background: #202124; border-radius: 14px; display: flex; align-items: center; gap: 8px; padding-left: 2px; font-size: 12.500px; margin-left: -4px; }
.kb { margin-left: -4px; width: 16px; }

.top { height: 47px; background: #ebebeb; display: flex; align-items: center; }
.wf { margin-left: 25px; }
.tm { margin-left: 28px; margin-right: 474px; }
.find { width: 468px; height: 32px; background: #fafafa; border-radius: 4px; display: flex; align-items: center; gap: 17px; padding-left: 18px; color: #616161; font-size: 13.500px; }
.td { margin-left: 490px; }
.me { position: relative; width: 28px; height: 28px; border-radius: 50%; background: #e2ddec; margin-left: 18px; font-weight: 600; font-size: 10.500px; line-height: 28px; text-align: center; color: #62577f; }
.me i { position: absolute; left: 18px; top: 18px; width: 10px; height: 10px; border-radius: 50%; background: #d13438; }
.notif { height: 37px; background: #e5e5e5; border-top: 2px solid #dedede; border-bottom: 1px solid #d8d8d8; display: flex; align-items: center; font-size: 13.500px; padding-left: 582.500px; color: #424242; }
.notif button { width: 72px; height: 24px; margin-left: 570px; margin-right: 12px; background: #fff; border: 1px solid #d1d1d1; border-radius: 4px; display: grid; place-items: center; font-size: 12px; line-height: 16px; color: #242424; }
.notif b { font-weight: 600; }

.main { height: 705px; display: flex; }
nav { width: 68px; background: linear-gradient(90deg, #ebebeb 60px, #d9d9d9); padding-top: 8px; display: flex; flex-direction: column; color: #616161; flex: none; }
.ni { position: relative; height: 56px; display: flex; flex-direction: column; align-items: center; flex: none; }
.ni .ico { margin: 1px 0; }
.nl { font-size: 10px; line-height: 14px; }
.low { margin-top: 2px; }
.badge { position: absolute; left: 36px; top: -3px; width: 16px; height: 16px; border-radius: 50%; background: #da3b01; color: #fff; font-weight: 700; font-size: 10px; line-height: 16px; text-align: center; }
.nd { margin: 9px auto 28px; }

.work { width: 1532px; display: flex; flex-direction: column; background: #f4f4f4; }
.meet { height: 61px; margin-bottom: -1px; background: #fff; border-bottom: 1px solid #dcdcdc; display: flex; align-items: center; position: relative; z-index: 1; box-shadow: 0 1px 2px #0001; flex: none; }
.sh { margin-left: 19px; color: #242424; }
.rc { margin-left: 15px; }
.tm2 { margin-left: 11px; width: 33px; font-size: 13px; color: #616161; }
.tools { display: flex; margin-left: 575px; }
.tool { position: relative; height: 60px; display: flex; flex-direction: column; align-items: center; padding-top: 11px; font-size: 11px; line-height: 15px; gap: 2px; flex: none; color: #424242; }
.tool.on::after { content: ""; position: absolute; bottom: 1.500px; width: 46px; height: 2.500px; border-radius: 1px; background: #5b5fc7; box-shadow: 0 0 3px #5b5fc788; }
.ti { height: 23px; display: flex; align-items: center; gap: 3px; font-size: 12.500px; }
.ti b { font-weight: 600; }
.dv { width: 1px; height: 32px; background: #d8d8d8; margin: 0 12px 0 8px; }
.cam { width: 46px; } .mic { width: 40px; margin-left: 10px; } .shr { width: 54px; margin-left: 6px; }
.cam .ti, .mic .ti, .shr .ti { color: #242424; }
.cv { margin-left: 1px; margin-top: 2px; }
.mic + .cv { margin-left: 3px; }
.leave { width: 83px; height: 32px; margin-left: 13px; background: #d13438; color: #fff; border-radius: 4px; display: flex; align-items: center; justify-content: center; gap: 7px; font-size: 13.500px; }

.body { height: 645px; display: flex; }
.stage { width: 964px; padding: 65px 0 0 5px; flex: none; }
.edge { width: 957px; height: 514px; background: #064a80; color: #e6edf3; display: grid; grid-template: 16px 19px 1fr / 935px 22px; font-family: "Noto Sans", sans-serif; font-size: 7px; }
.etabs { grid-column: 1 / 3; background: #022947; display: flex; align-items: center; padding-left: 5px; }
.etabs > .ico:nth-child(2) { margin-left: 10px; } .etabs > .ico:nth-child(3) { margin: 0 9.500px 0 12px; }
.etab { width: 78.400px; height: 16px; display: flex; align-items: center; padding-left: 5.500px; background: linear-gradient(#47627a, #47627a) 0 50% / 1px 10px no-repeat; flex: none; }
.etab.on { background: #064a80; border-radius: 3px 3px 0 0; }
.et { width: 50px; margin: 0 1px 0 4px; font-size: 7px; }
.ep { margin-left: 6px; }
.ewc { margin-left: auto; margin-right: 8px; display: flex; align-items: center; gap: 18px; }
.ewc i { width: 5px; height: 1px; background: #e6edf3; } .ewc em { width: 5px; height: 5px; border: 1px solid #e6edf3; }
.ebar { grid-column: 1 / 3; display: flex; align-items: center; padding-left: 10px; gap: 13px; }
.dim2 { color: #4480ad; }
.eurl { width: 727px; height: 15px; border-radius: 8px; background: #05365f; margin-left: -4px; display: flex; align-items: center; padding: 0 8px; gap: 4px; flex: none; }
.path { margin-left: 9px; }
.eo { margin-left: auto; display: flex; gap: 12px; color: #7b9cba; }
.etools { display: flex; align-items: center; gap: 13.300px; margin-left: -3px; }
.etools .ico:nth-child(8) { margin-left: -2px; }
.epage { margin-left: 2px; border-radius: 4px; overflow: hidden; height: 477px; width: 933px; }
.eside { display: flex; flex-direction: column; align-items: center; gap: 11.200px; padding-top: 6px; height: 477px; }
.eside i { width: 14px; height: 1px; background: #2f6b9b; } .eside span { flex: 1; }
.eside .ico:last-child { margin-bottom: 4px; }
.dia { display: block; font-family: "Liberation Sans", Arial, sans-serif; text-anchor: middle; }
.hd { font-size: 18px; font-weight: 700; fill: #fff; }
.sm { font-size: 9.200px; fill: #fff; }
.seg { font-size: 17px; fill: #111; } .vu { font-size: 15px; fill: #111; }
.who { display: inline-flex; margin: 29px 0 0 8px; width: 177px; height: 24px; background: #767676; color: #fff; border-radius: 4px; align-items: center; justify-content: center; font-size: 12px; }

.people { width: 248px; position: relative; overflow: hidden; flex: none; }
.pg { display: grid; grid-template-columns: 110px 110px; grid-auto-rows: 110px; padding: 40px 0 0 13px; height: 507px; }
.p { padding-left: 8px; }
.av { position: relative; width: 70px; height: 70px; margin-left: 12px; border-radius: 50%; display: grid; place-items: center; font-weight: 600; font-size: 27px; line-height: 1; padding-bottom: 1px; box-shadow: 0 1px 3px #0003; }
.talk { box-shadow: 0 0 0 1.500px #f4f4f4, 0 0 0 5px #5b5fc7, 0 0 55px 22px #5b5fc733; }
.blue { background: #c8d4e7; color: #002050; } .lav { background: #e2ddec; color: #433b61; } .vio { background: #d7d4e8; color: #2a2059; }
.red { background: #f2d7d8; color: #751d2b; } .pink { background: #ebd3e0; color: #571a3e; } .teal { background: #d9eff2; color: #3a6b6e; }
.more { background: #fff; color: #242424; box-shadow: 0 0 0 1px #d5d5d5; padding: 0; }
.pn { position: relative; display: flex; justify-content: space-between; align-items: center; height: 18px; width: 92px; margin-top: 8px; font-size: 12px; line-height: 18px; color: #333; --bg: #f4f4f4; }
.all { justify-content: center; width: 93px; }
.self { width: 241px; height: 133px; background: #e5e5e5; margin-left: 2px; display: grid; place-items: center; }
.sav { width: 56px; height: 56px; border-radius: 50%; background: #e2ddec; color: #433b61; display: grid; place-items: center; font-size: 20px; font-weight: 600; }

.chat { width: 320px; background: #fff; border-left: 1px solid #dcdcdc; display: flex; flex-direction: column; }
.ch { height: 61px; border-bottom: 1px solid #dcdcdc; display: flex; align-items: center; justify-content: space-between; padding: 3px 28px 0 20px; font-size: 15px; color: #242424; flex: none; }
.log { height: 499px; padding: 12px 0 0 30px; font-size: 12px; color: #616161; }
.mh { display: flex; gap: 9px; height: 18px; line-height: 18px; }
.bub { position: relative; background: #f4f4f4; border-radius: 5px; padding: 7px 0 9px 16px; color: #333; font-size: 13.500px; }
.ln { height: 20px; line-height: 20px; }
.m3 { margin-top: 12px; }
.mav { position: absolute; left: -16px; top: 2px; width: 28px; height: 28px; border-radius: 50%; display: grid; place-items: center; font-size: 10.500px; font-weight: 600; }
.m1 .mav { background: #fff; }
.note { height: 40px; display: flex; align-items: center; margin: 0 0 0 -14px; padding-bottom: 4px; }
.note span { margin-left: 14px; } .note .nt { margin-left: 12px; }
.box { width: 290px; height: 42px; flex: none; margin-left: 15px; border: 1px solid #dedede; border-bottom: 2px solid #5b5fc7; border-radius: 4px; padding-left: 10px; display: flex; align-items: center; font-size: 13.500px; color: #616161; }
.ci { display: flex; gap: 15px; padding: 9px 0 0 21px; align-items: center; }
.send { margin-left: 34px; }

footer { height: 40px; background: linear-gradient(90deg, #4b78a5, #426f9d 40%, #436f9b 70%, #4876a3); border-top: 1px solid #3d6890; display: flex; align-items: center; color: #fff; }
.start { width: 50px; padding-left: 11px; }
.tk { width: 62px; height: 38px; display: flex; align-items: center; justify-content: center; position: relative; z-index: 0; }
.tk.open::before { content: ""; position: absolute; inset: 0 2px; border: 1px solid #9fb9d3; background: #6c8fb4; z-index: -1; outline: 1px solid #34587c; }
.tk.stack { padding-right: 6px; }
.tk.stack::before { inset: 0 6px 0 2px; }
.tk.stack::after { content: ""; position: absolute; left: 57px; top: 0; width: 3px; height: 38px; border: 1px solid #9fb9d3; border-left: 0; outline: 1px solid #34587c; }
.tk.active::before { background: #8ea8c6; border-color: #e3ebf3; }
.tk.active::after { border-color: #e3ebf3; }
.tray { margin-left: auto; display: flex; align-items: center; padding-right: 19px; height: 40px; }
.tray > i { border: 4px solid transparent; border-bottom-color: #fff; border-top: 0; margin-right: 12px; margin-top: 4px; }
.tray > .ico { margin: 1px 8px 0 0; }
.tt { display: flex; flex-direction: column; align-items: center; font-size: 11.500px; line-height: 17px; margin-top: 0; width: 58px; }
.lang { width: 20px; margin: 0 18px 0 10px; }
.wm { position: absolute; left: 1225px; top: 773px; color: rgba(130, 130, 130, .6); pointer-events: none; }
.w1 { font-size: 19px; line-height: 28px; } .w2 { font-size: 14.500px; line-height: 18px; }
</style>
